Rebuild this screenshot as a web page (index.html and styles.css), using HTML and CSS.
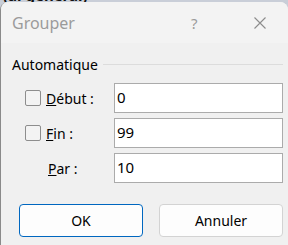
FILE: index.html
```html
<!DOCTYPE html>
<html lang="fr">
<head>
    <meta charset="UTF-8" />
    <title>Grouper</title>
    <link rel="stylesheet" href="styles.css">
</head>
<body>

    <div class="behind">
        <span>(al général)</span>
    </div>

    <div class="dialog">
        <div class="titlebar">
            <span class="title">Grouper</span>
            <span class="help">?</span>
            <span class="close">
                <svg width="12" height="12" viewBox="0 0 12 12">
                    <path d="M0.5 0.5 L11.5 11.5 M11.5 0.5 L0.5 11.5" stroke="#8c8c8c" stroke-width="1.1" fill="none" />
                </svg>
            </span>
        </div>

        <div class="content">
            <div class="group-title">
                <span>Automatique</span>
                <span class="rule"></span>
            </div>

            <div class="row">
                <span class="check"></span>
                <label class="label"><u>D</u>ébut :</label>
                <input class="field" type="text" value="0" />
            </div>

            <div class="row">
                <span class="check"></span>
                <label class="label"><u>F</u>in :</label>
                <input class="field" type="text" value="99" />
            </div>

            <div class="row">
                <span class="check-space"></span>
                <label class="label indent"><u>P</u>ar :</label>
                <input class="field" type="text" value="10" />
            </div>

            <div class="buttons">
                <button class="btn primary">OK</button>
                <button class="btn">Annuler</button>
            </div>
        </div>
    </div>

</body>
</html>
```

FILE: styles.css
```css
* {
    box-sizing: border-box;
    margin: 0;
    padding: 0;
}

body {
    font-family: 'Noto Sans', 'Open Sans', sans-serif;
    background: #c9ced8;
    width: 288px;
    height: 245px;
    overflow: hidden;
}

/* window behind the dialog, only its last pixels show */
.behind {
    height: 2px;
    overflow: hidden;
    position: relative;
}

.behind span {
    display: block;
    margin-top: -13px;
    padding-left: 3px;
    font-size: 15px;
    line-height: 16px;
    font-weight: bold;
    color: #111;
}

.dialog {
    background: #f0f0f0;
    border-radius: 8px 8px 0 0;
    height: 243px;
    overflow: hidden;
    border-left: 1px solid #8a8a8a;
}

.titlebar {
    height: 41px;
    background: #f3f3f3;
    display: flex;
    align-items: center;
    padding-left: 11px;
    color: #9b9b9b;
}

.title {
    font-size: 16px;
    flex: 1;
}

.help {
    font-size: 15px;
    width: 63px;
}

.close {
    width: 34px;
    display: flex;
    padding-top: 1px;
}

.content {
    padding: 11px 0 0 0;
}

.group-title {
    display: flex;
    align-items: center;
    height: 20px;
    padding-left: 11px;
    margin-bottom: 9px;
    font-size: 14px;
    color: #000;
}

.rule {
    flex: 1;
    height: 1px;
    background: #dcdcdc;
    margin-left: 5px;
    margin-right: 5px;
}

.row {
    display: flex;
    align-items: center;
    height: 30px;
    margin-bottom: 5px;
    padding-left: 24px;
    font-size: 14px;
}

.check,
.check-space {
    width: 16px;
    height: 16px;
    flex-shrink: 0;
}

.check {
    border: 1px solid #8d8d8d;
    border-radius: 2px;
    background: #f3f3f3;
}

.label {
    width: 73px;
    padding-left: 5px;
    color: #000;
}

.label.indent {
    padding-left: 7px;
}

.field {
    width: 169px;
    height: 30px;
    border: 1px solid #ababab;
    background: #fff;
    font-family: inherit;
    font-size: 15px;
    padding: 0 0 3px 2px;
    color: #000;
    outline: none;
}

.buttons {
    display: flex;
    gap: 16px;
    padding-left: 18px;
    margin-top: 21px;
}

.btn {
    width: 124px;
    height: 33px;
    border: 1px solid #d3d3d3;
    border-radius: 4px;
    background: #fdfdfd;
    font-family: inherit;
    font-size: 14px;
    color: #000;
}

.btn.primary {
    border-color: #0067c0;
}
```
